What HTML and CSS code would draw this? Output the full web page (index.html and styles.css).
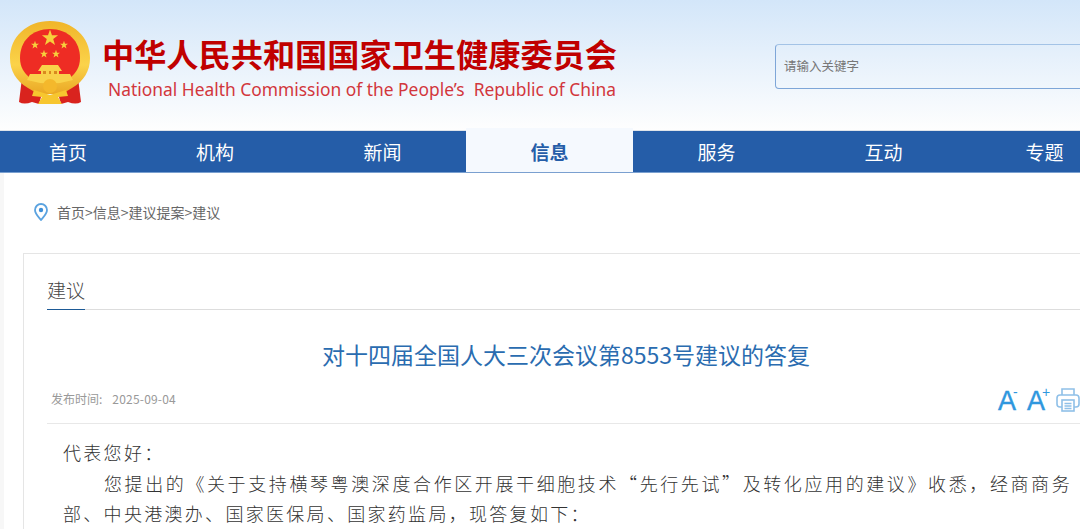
FILE: index.html
```html
<!DOCTYPE html>
<html lang="zh-CN">
<head>
<meta charset="utf-8">
<title>对十四届全国人大三次会议第8553号建议的答复</title>
<link rel="stylesheet" href="styles.css">
</head>
<body>
<div class="page">
  <header class="top">
    <svg class="emblem" viewBox="0 0 80 86" width="80" height="86">
      <defs>
        <linearGradient id="ring" x1="0" y1="0" x2="0" y2="1"><stop offset="0" stop-color="#f0b52a"/><stop offset="0.6" stop-color="#fbd34a"/><stop offset="1" stop-color="#eaa825"/></linearGradient>
        <path id="star" d="M0 -10 L2.350 -3.240 9.510 -3.090 3.800 1.240 5.880 8.090 0 4 -5.880 8.090 -3.800 1.240 -9.510 -3.090 -2.350 -3.240Z"/>
      </defs>
      <path d="M12 58 L9 82 Q14 85 22 82 L29 84 L33 70Z" fill="#d9231e"/>
      <path d="M68 58 L71 82 Q66 85 58 82 L51 84 L47 70Z" fill="#d9231e"/>
      <path d="M40 1 C63 1 80 17 80 38 C80 51 74 61 62 68 L52 74 H28 L18 68 C6 61 0 51 0 38 C0 17 17 1 40 1Z" fill="url(#ring)"/>
      <path d="M40 9 C58 9 70 21 70 38 C70 47 66 53 60 58 C52 62 28 62 20 58 C14 53 10 47 10 38 C10 21 22 9 40 9Z" fill="#ee2c24"/>
      <use href="#star" transform="translate(40 18) scale(.85)" fill="#f7cf3c"/>
      <use href="#star" transform="translate(25 25) scale(.42)" fill="#f7cf3c"/>
      <use href="#star" transform="translate(54 25) scale(.42)" fill="#f7cf3c"/>
      <use href="#star" transform="translate(34 34) scale(.42)" fill="#f7cf3c"/>
      <use href="#star" transform="translate(46 34) scale(.42)" fill="#f7cf3c"/>
      <path d="M28 51 L32 45 H48 L52 51 H49 V54 H60 L63 60 Q40 67 17 60 L20 54 H31 V51Z" fill="#f9d24a"/>
      <path d="M33 54 h3 v-3 h-3z M39 54 h2 v-3 h-2z M44 54 h3 v-3 h-3z" fill="#d98a1e"/>
      <circle cx="40" cy="66" r="7" fill="#f4b82c"/>
      <path d="M24 70 L40 75 L56 70 L58 76 L48 77 L52 84 H28 L32 77 L22 76Z" fill="#f7c62f"/>
    </svg>
    <div class="brand">
      <div class="cn">中华人民共和国国家卫生健康委员会</div>
      <div class="en">National Health Commission of the People’s &nbsp;Republic of China</div>
    </div>
    <div class="search">请输入关键字</div>
  </header>
  <nav class="nav">
    <a class="n1">首页</a>
    <a class="n2">机构</a>
    <a class="n3">新闻</a>
    <a class="n3 on">信息</a>
    <a class="n3">服务</a>
    <a class="n3">互动</a>
    <a class="n7">专题</a>
  </nav>
  <main class="main">
    <div class="crumb">
      <svg class="pin" viewBox="0 0 14 18" width="14" height="18"><path d="M7 1a6 6 0 0 0-6 6c0 4 4 7.500 6 10 2-2.500 6-6 6-10a6 6 0 0 0-6-6z" fill="none" stroke="#5ba3e0" stroke-width="1.800"/><circle cx="7" cy="7" r="2.200" fill="#3d8fd8"/></svg>
      <span>首页&gt;信息&gt;建议提案&gt;建议</span>
    </div>
    <section class="card">
      <div class="tabs"><span class="tab">建议</span></div>
      <h1 class="title">对十四届全国人大三次会议第8553号建议的答复</h1>
      <div class="meta">
        <span class="label">发布时间:</span><span class="date">2025-09-04</span>
        <div class="tools">
          <span class="a">A<sup>-</sup></span>
          <span class="a">A<sup>+</sup></span>
          <svg class="print" viewBox="0 0 24 26" width="24" height="26" fill="none" stroke="#8fc0e8" stroke-width="1.600"><path d="M6 8V2h12v6"/><rect x="1" y="8" width="22" height="12" rx="3"/><rect x="6" y="13" width="12" height="11" fill="#fff"/><path d="M8.500 16.500h7M8.500 19h7M8.500 21.500h7"/></svg>
        </div>
      </div>
      <div class="body">
        <p>代表您好：</p>
        <p class="in">您提出的《关于支持横琴粤澳深度合作区开展干细胞技术“先行先试”及转化应用的建议》收悉，经商商务部、中央港澳办、国家医保局、国家药监局，现答复如下：</p>
      </div>
    </section>
  </main>
</div>
</body>
</html>
```
FILE: styles.css
```css
* { box-sizing: border-box; }
html, body { margin: 0; height: 529px; overflow: hidden; background: #fff; }
body { font-family: "Noto Sans CJK SC", "Noto Sans", sans-serif; }
.page { width: 1140px; }
.top { height: 130px; display: flex; align-items: flex-start; background: linear-gradient(#d3e6f9, #fefefe); }
.emblem { margin: 20px 0 0 10px; flex: none; }
.brand { margin: 33px 0 0 13px; width: 520px; }
.cn { font-size: 32.200px; line-height: 40px; font-weight: 700; color: #c00000; white-space: nowrap; margin-left: -1px; }
.en { font: 17.400px/24px "Noto Sans", sans-serif; color: #d2363c; margin: 4px 0 0 5px; white-space: nowrap; }
.search { margin: 44px 0 0 152px; width: 340px; height: 45px; border: 1px solid #7ea6d8; border-top-color: #a3c3e6; border-radius: 4px; padding-left: 8px; font-size: 12.500px; line-height: 41px; color: #777; }
.nav { height: 43px; display: flex; background: #255da8; border-top: 1px solid #dfe4ea; border-bottom: 1px solid #7aa0d0; position: relative; }
.nav a { height: 41px; font-size: 19px; line-height: 42px; text-align: center; color: #fff; flex: none; }
.n1 { width: 136px; }
.n2 { width: 163px; padding-right: 5px; }
.n3 { width: 167px; }
.n7 { width: 155px; }
.nav a.on { background: #f5f9fe; color: #255da8; font-weight: 700; height: 44px; margin-top: -3px; line-height: 48px; }
.main { background: #fff; border-left: 4px solid #f7f7f7; padding: 28px 0 0 19px; }
.crumb { display: flex; align-items: center; gap: 9px; padding-left: 11px; height: 22px; font-size: 14px; color: #666; }
.card { margin-top: 30px; border: 1px solid #e5e5e5; padding: 0 23px; width: 1086px; height: 300px; }
.tabs { height: 56px; border-bottom: 1px solid #ddd; }
.tab { display: inline-block; height: 56px; padding-top: 21px; font-size: 19px; line-height: 30px; font-weight: 300; color: #444; border-bottom: 1px solid #1d5a96; }
.title { margin: 26px 0 0; font-size: 23px; line-height: 36px; font-weight: 400; color: #2a6cb0; text-align: center; }
.meta { margin-top: 15px; height: 37px; display: flex; align-items: flex-start; border-bottom: 1px solid #e8e8e8; padding: 0 0 0 4px; font-size: 12px; line-height: 24px; color: #999; position: relative; }
.date { margin-left: 10px; letter-spacing: .2px; }
.tools { position: absolute; left: 951px; top: -3px; display: flex; align-items: flex-start; gap: 7px; }
.a { font: 27px/34px "Liberation Sans", sans-serif; color: #2f97de; width: 22px; white-space: nowrap; -webkit-text-stroke: .4px #2f97de; }
.a sup { font-size: 14px; line-height: 0; vertical-align: 13px; margin-left: -3px; -webkit-text-stroke: 0; }
.print { margin: 3px 0 0 0; }
.body { padding: 13px 0 0 16px; width: 1025px; font-size: 18px; line-height: 30.500px; font-weight: 300; letter-spacing: 2.300px; color: #333; }
.body p { margin: 0; text-align: justify; }
.in { text-indent: 41px; }
```
